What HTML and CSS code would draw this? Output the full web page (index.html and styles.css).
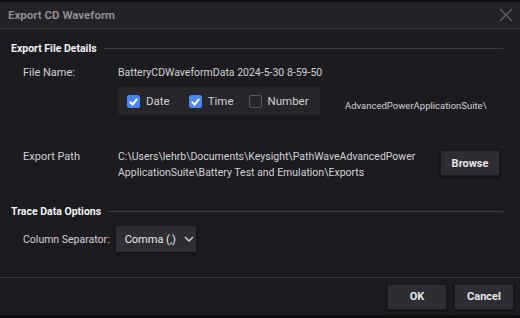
FILE: index.html
```html
<!DOCTYPE html>
<html lang="en">
  <head>
    <meta charset="UTF-8" />
    <title>Export CD Waveform</title>
    <link rel="stylesheet" href="styles.css">
  </head>
  <body>
    <div class="topstrip"></div>
    <div class="dialog">
      <div class="titlebar">
        <span class="title">Export CD Waveform</span>
        <svg class="close" width="14" height="14" viewBox="0 0 14 14">
          <path d="M1 1 L13 13 M13 1 L1 13" stroke="#6a6a70" stroke-width="1.2" fill="none" />
        </svg>
      </div>

      <div class="content">
        <!-- Export File Details -->
        <div class="section-head">
          <span>Export File Details</span>
          <div class="rule"></div>
        </div>

        <div class="row name-row">
          <div class="label">File Name:</div>
          <div class="value">BatteryCDWaveformData 2024-5-30 8-59-50</div>
        </div>

        <div class="row options-row">
          <div class="label"></div>
          <div class="checks">
            <label class="check"><span class="box on"></span>Date</label>
            <label class="check"><span class="box on"></span>Time</label>
            <label class="check"><span class="box"></span>Number</label>
          </div>
          <div class="suite">AdvancedPowerApplicationSuite\</div>
        </div>

        <div class="row path-row">
          <div class="label">Export Path</div>
          <div class="path">C:\Users\lehrb\Documents\Keysight\PathWaveAdvancedPower<br>ApplicationSuite\Battery Test and Emulation\Exports</div>
          <button class="btn browse">Browse</button>
        </div>

        <!-- Trace Data Options -->
        <div class="section-head trace">
          <span>Trace Data Options</span>
          <div class="rule"></div>
        </div>

        <div class="row sep-row">
          <div class="label short">Column Separator:</div>
          <div class="select">
            Comma (,)
            <svg width="10" height="6" viewBox="0 0 10 6">
              <path d="M1 1 L5 5 L9 1" stroke="#d8d8dc" stroke-width="1.3" fill="none" />
            </svg>
          </div>
        </div>
      </div>

      <div class="footer">
        <button class="btn">OK</button>
        <button class="btn">Cancel</button>
      </div>
    </div>
    <div class="bottomstrip"></div>
  </body>
</html>
```

FILE: styles.css
```css
body {
  margin: 0;
  width: 520px;
  height: 318px;
  overflow: hidden;
  background: #1c1b20;
  font-family: Roboto, "Liberation Sans", sans-serif;
  font-size: 10.5px;
  color: #d2d2d6;
}

.topstrip {
  height: 2px;
  background: #0e0e10;
}

.bottomstrip {
  height: 3px;
  background: #0e0e10;
}

.dialog {
  height: 313px;
  display: flex;
  flex-direction: column;
}

.titlebar {
  height: 26px;
  background: #232227;
  border-bottom: 1px solid #38383d;
  display: flex;
  align-items: center;
  justify-content: space-between;
  padding: 0 8px;
}

.title {
  font-weight: bold;
  color: #8d8d93;
  font-size: 11.5px;
}

.close {
  margin-right: -1px;
}

.content {
  flex: 1;
  padding: 12px 17px 0 11px;
}

.section-head {
  display: flex;
  align-items: center;
  gap: 7px;
  font-weight: bold;
  font-size: 10.5px;
  color: #f2f2f4;
  height: 14px;
}

.rule {
  flex: 1;
  height: 1px;
  background: #3e3e44;
}

.row {
  display: flex;
  align-items: center;
}

.label {
  width: 95px;
  padding-left: 12px;
  flex-shrink: 0;
  font-size: 11px;
  white-space: nowrap;
}

.name-row {
  margin-top: 11px;
}

.options-row {
  margin-top: 8px;
  align-items: flex-end;
}

.checks {
  display: flex;
  background: #25252a;
  height: 28px;
  width: 202px;
  align-items: center;
  padding-left: 9px;
  box-sizing: border-box;
  font-size: 11.5px;
}

.check {
  display: flex;
  align-items: center;
  gap: 6px;
}

.check:nth-child(1) {
  margin-right: 19px;
}

.check:nth-child(2) {
  margin-right: 15px;
}

.box {
  width: 11px;
  height: 11px;
  border: 1px solid #5a5a60;
  border-radius: 2px;
  display: inline-block;
  position: relative;
}

.box.on {
  background: #4b86f0;
  border-color: #4b86f0;
}

.box.on::after {
  content: "";
  position: absolute;
  left: 3px;
  top: 1px;
  width: 3px;
  height: 6px;
  border: solid #fff;
  border-width: 0 2px 2px 0;
  transform: rotate(40deg);
}

.suite {
  font-size: 9.5px;
  margin-left: 25px;
  margin-bottom: 4px;
}

.path-row {
  margin-top: 34px;
  align-items: flex-start;
}

.path-row .label {
  padding-top: 1px;
}

.path {
  line-height: 16px;
  flex: 1;
}

.btn {
  background: #2d2d33;
  border: 1px solid #1a1a1e;
  box-shadow: 0 1px 2px rgba(0, 0, 0, 0.6);
  color: #e6e6ea;
  font-family: Roboto, "Liberation Sans", sans-serif;
  font-size: 11px;
  font-weight: bold;
  width: 60px;
  height: 26px;
  padding: 0;
  flex-shrink: 0;
}

.browse {
  margin-top: 1px;
  margin-right: 3px;
}

.trace {
  margin-top: 23px;
}

.sep-row {
  margin-top: 8px;
}

.label.short {
  width: auto;
  font-size: 10.5px;
  margin-right: 6px;
}

.select {
  background: #2d2d33;
  box-shadow: 0 1px 2px rgba(0, 0, 0, 0.6);
  height: 26px;
  width: 80px;
  box-sizing: border-box;
  display: flex;
  align-items: center;
  gap: 8px;
  padding-left: 9px;
  color: #ececf0;
  font-size: 11px;
  white-space: nowrap;
}

.footer {
  height: 37px;
  border-top: 1px solid #38383d;
  display: flex;
  justify-content: flex-end;
  align-items: center;
  gap: 7px;
  padding-right: 6px;
}
```
